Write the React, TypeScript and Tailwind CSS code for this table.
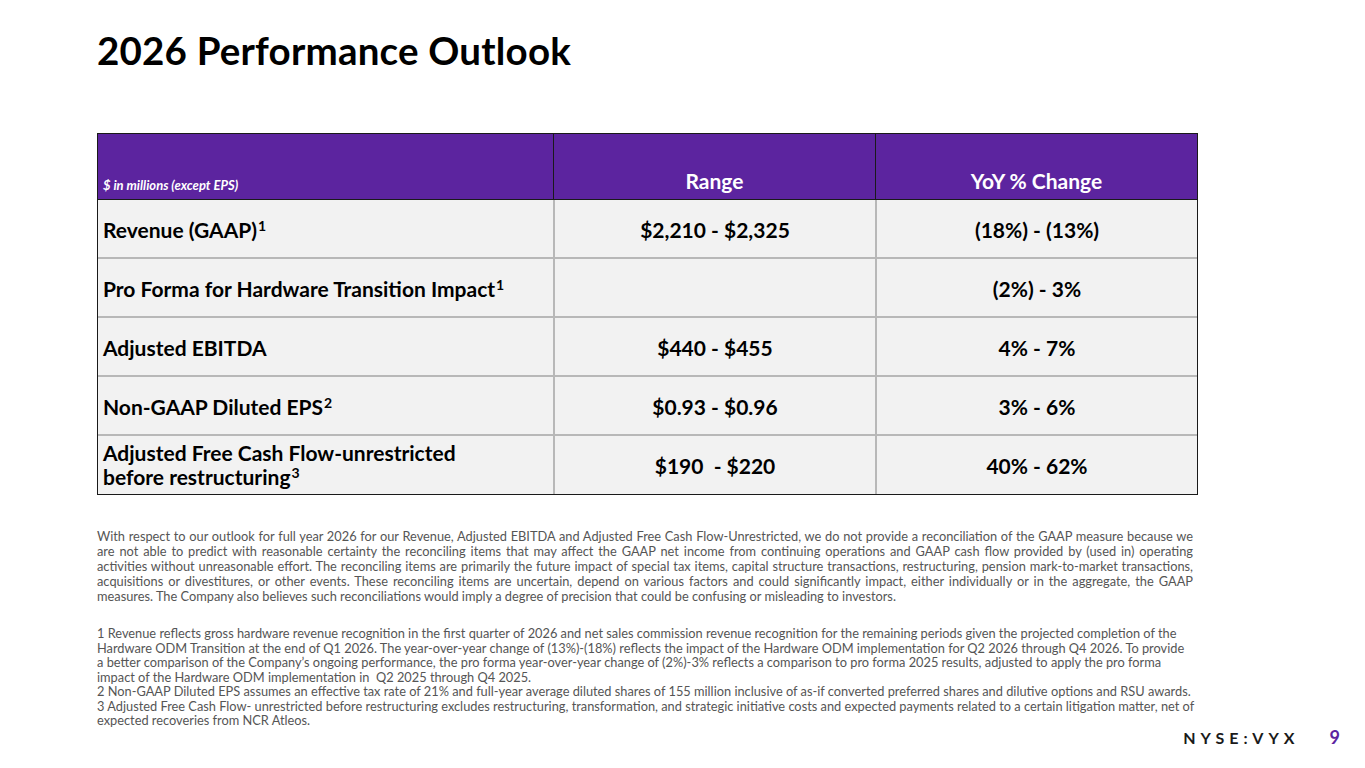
const rows = [
  { label: "Revenue (GAAP)", sup: "1", range: "$2,210 - $2,325", yoy: "(18%) - (13%)" },
  { label: "Pro Forma for Hardware Transition Impact", sup: "1", range: "", yoy: "(2%) - 3%" },
  { label: "Adjusted EBITDA", sup: "", range: "$440 - $455", yoy: "4% - 7%" },
  { label: "Non-GAAP Diluted EPS", sup: "2", range: "$0.93 - $0.96", yoy: "3% - 6%" },
];

const para1 = [
  "With respect to our outlook for full year 2026 for our Revenue, Adjusted EBITDA and Adjusted Free Cash Flow-Unrestricted, we do not provide a reconciliation of the GAAP measure because we",
  "are not able to predict with reasonable certainty the reconciling items that may affect the GAAP net income from continuing operations and GAAP cash flow provided by (used in) operating",
  "activities without unreasonable effort. The reconciling items are primarily the future impact of special tax items, capital structure transactions, restructuring, pension mark-to-market transactions,",
  "acquisitions or divestitures, or other events. These reconciling items are uncertain, depend on various factors and could significantly impact, either individually or in the aggregate, the GAAP",
];

const para2 = [
  "1 Revenue reflects gross hardware revenue recognition in the first quarter of 2026 and net sales commission revenue recognition for the remaining periods given the projected completion of the",
  "Hardware ODM Transition at the end of Q1 2026. The year-over-year change of (13%)-(18%) reflects the impact of the Hardware ODM implementation for Q2 2026 through Q4 2026. To provide",
  "a better comparison of the Company’s ongoing performance, the pro forma year-over-year change of (2%)-3% reflects a comparison to pro forma 2025 results, adjusted to apply the pro forma",
  "impact of the Hardware ODM implementation in  Q2 2025 through Q4 2025.",
  "2 Non-GAAP Diluted EPS assumes an effective tax rate of 21% and full-year average diluted shares of 155 million inclusive of as-if converted preferred shares and dilutive options and RSU awards.",
  "3 Adjusted Free Cash Flow- unrestricted before restructuring excludes restructuring, transformation, and strategic initiative costs and expected payments related to a certain litigation matter, net of",
  "expected recoveries from NCR Atleos.",
];

const Sup = ({ n }: { n: string }) => (
  <span className="text-[14px] leading-none ml-[1px] self-start mt-[17px]">{n}</span>
);

const App = () => {
  return (
    <div className="w-[1365px] h-[768px] bg-white relative overflow-hidden font-['Lato','Noto_Sans',sans-serif] text-black">
      <div className="pl-[97px] pr-[167px] pt-[27px]">
        <h1 className="text-[38.5px] leading-[46px] font-bold tracking-[0.2px]">2026 Performance Outlook</h1>

        <div className="mt-[60px] border-[1.5px] border-[#1a1a1a] bg-[#f2f2f2]">
          <div className="grid grid-cols-[455px_322px_1fr] h-[66px] bg-[#5c249f] text-white border-b-[1.5px] border-[#1a1a1a]">
            <div className="flex items-end pl-[5px] pb-[4px] text-[13px] font-bold italic">$ in millions (except EPS)</div>
            <div className="flex items-end justify-center pb-[3px] text-[21px] font-bold border-l-[1.5px] border-[#1a1a1a]">Range</div>
            <div className="flex items-end justify-center pb-[3px] text-[21px] font-bold border-l-[1.5px] border-[#1a1a1a]">YoY % Change</div>
          </div>
          {rows.map((r, i) => (
            <div key={i} className="grid grid-cols-[455px_322px_1fr] h-[59px] border-b-2 border-[#b8b8b8] text-[21px] font-bold">
              <div className="flex items-center pl-[5px] pt-[2px]">
                <span>{r.label}</span>
                {r.sup && <Sup n={r.sup} />}
              </div>
              <div className="flex items-center justify-center pt-[2px] border-l-2 border-[#b8b8b8]">{r.range}</div>
              <div className="flex items-center justify-center pt-[2px] border-l-2 border-[#b8b8b8]">{r.yoy}</div>
            </div>
          ))}
          <div className="grid grid-cols-[455px_322px_1fr] h-[58px] text-[21px] font-bold">
            <div className="flex flex-col justify-center pl-[5px] pt-[2px] leading-[24px]">
              <span>Adjusted Free Cash Flow-unrestricted</span>
              <span>
                before restructuring<span className="text-[14px] relative -top-[7px] ml-[1px]">3</span>
              </span>
            </div>
            <div className="flex items-center justify-center pt-[2px] border-l-2 border-[#b8b8b8] whitespace-pre">$190  - $220</div>
            <div className="flex items-center justify-center pt-[2px] border-l-2 border-[#b8b8b8]">40% - 62%</div>
          </div>
        </div>

        <div className="mt-[34px] w-[1096px] text-[12.8px] leading-[15px] text-[#555555]">
          {para1.map((l, i) => (
            <div key={i} className="whitespace-nowrap text-justify [text-align-last:justify]">{l}</div>
          ))}
          <div className="whitespace-nowrap">
            measures. The Company also believes such reconciliations would imply a degree of precision that could be confusing or misleading to investors.
          </div>
          <div className="h-[22px]" />
          <div className="leading-[14.5px]">
            {para2.map((l, i) => (
              <div key={i} className="whitespace-pre">{l}</div>
            ))}
          </div>
        </div>
      </div>

      <div className="absolute right-[25px] bottom-[17px] flex items-center gap-[30px]">
        <span className="text-[16px] font-bold tracking-[5px] text-[#1a1a1a]">NYSE:VYX</span>
        <span className="text-[18px] font-bold text-[#5c249f]">9</span>
      </div>
    </div>
  );
};

export default App;
